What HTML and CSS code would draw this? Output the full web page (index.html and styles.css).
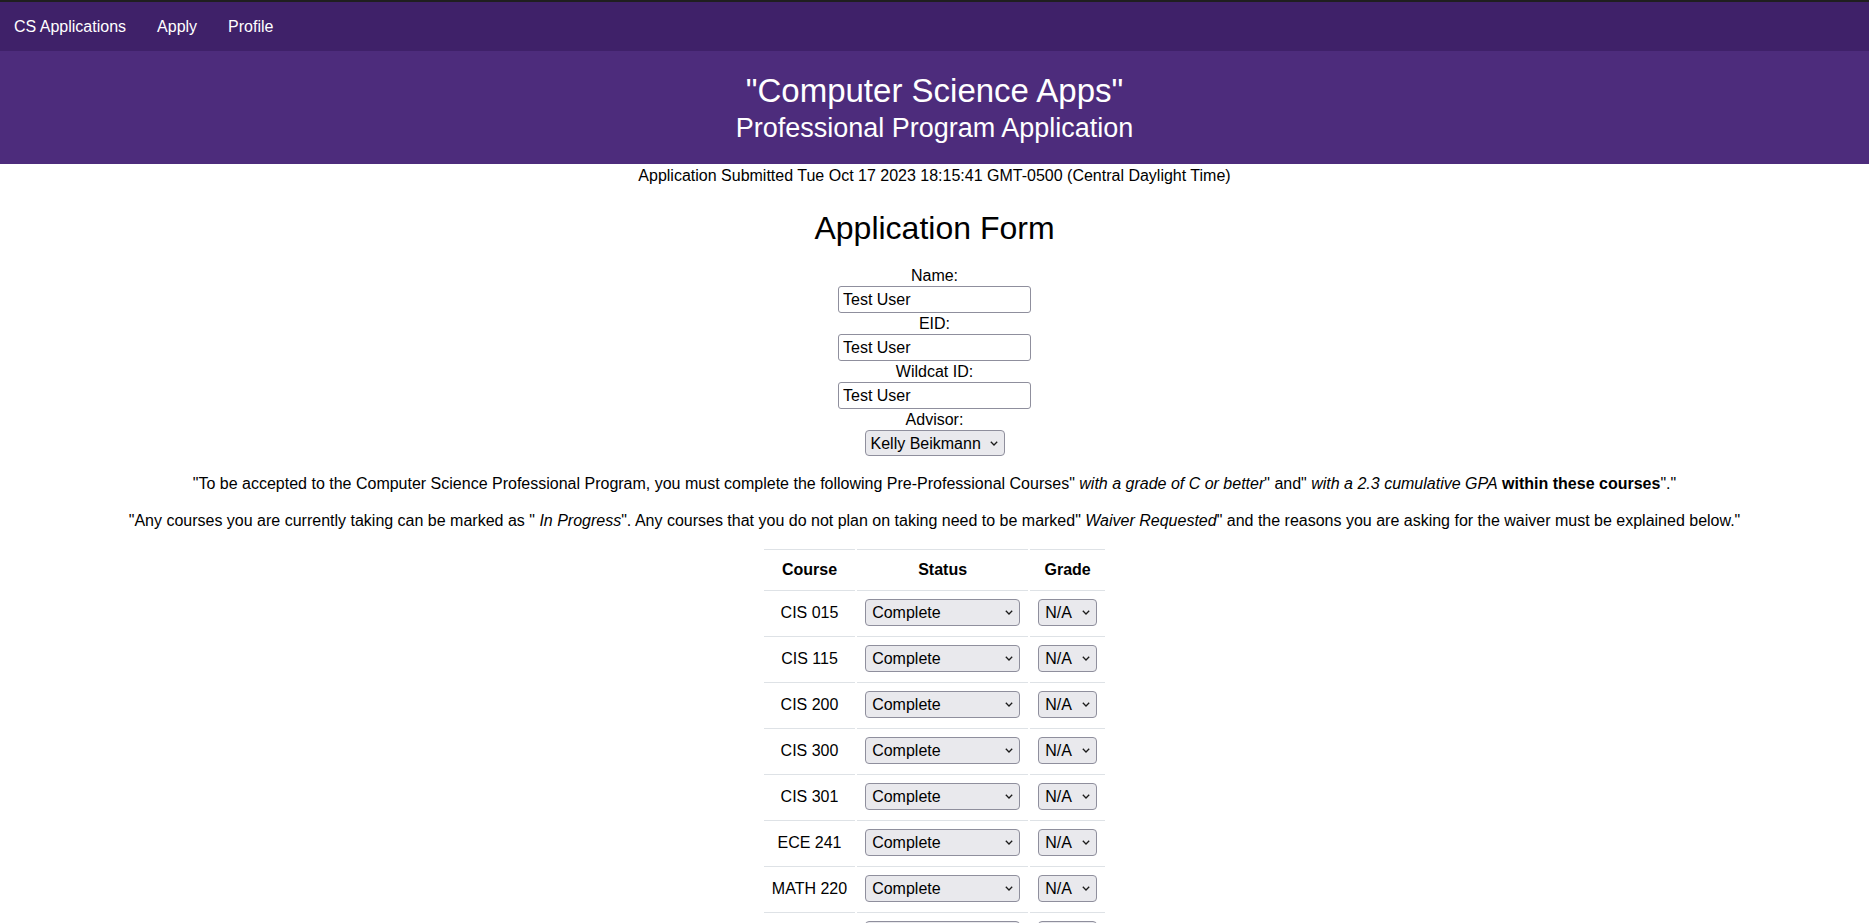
FILE: index.html
```html
<!DOCTYPE html>
<html lang="en">
<head>
<meta charset="utf-8">
<title>CS Applications</title>
<link rel="stylesheet" href="styles.css">
</head>
<body>
<nav class="topnav">
  <a class="nav-link" href="#">CS Applications</a>
  <a class="nav-link" href="#">Apply</a>
  <a class="nav-link" href="#">Profile</a>
</nav>
<header class="banner">
  <div class="banner-title">"Computer Science Apps"</div>
  <div class="banner-sub">Professional Program Application</div>
</header>
<main class="content">
  <div class="submitted">Application Submitted Tue Oct 17 2023 18:15:41 GMT-0500 (Central Daylight Time)</div>
  <h1 class="form-title">Application Form</h1>
  <div class="fields">
    <label class="field-label">Name:</label>
    <input class="text-input" type="text" value="Test User">
    <label class="field-label">EID:</label>
    <input class="text-input" type="text" value="Test User">
    <label class="field-label">Wildcat ID:</label>
    <input class="text-input" type="text" value="Test User">
    <label class="field-label">Advisor:</label>
    <span class="sel sel-advisor">
      <select><option>Kelly Beikmann</option></select>
      <svg class="chev" width="8" height="5" viewBox="0 0 8 5"><path d="M0.8 0.8 L4 4 L7.2 0.8" fill="none" stroke="#1b1b1b" stroke-width="1.3"/></svg>
    </span>
  </div>
  <p class="note note-first">"To be accepted to the Computer Science Professional Program, you must complete the following Pre-Professional Courses" <i>with a grade of C or better</i>" and" <i>with a 2.3 cumulative GPA</i> <b>within these courses</b>"."</p>
  <p class="note">"Any courses you are currently taking can be marked as " <i>In Progress</i>". Any courses that you do not plan on taking need to be marked" <i>Waiver Requested</i>" and the reasons you are asking for the waiver must be explained below."</p>
  <table class="courses">
    <thead>
      <tr><th class="c-course">Course</th><th class="c-status">Status</th><th class="c-grade">Grade</th></tr>
    </thead>
    <tbody id="rows"></tbody>
  </table>
</main>
<script>
  var courses = ["CIS 015","CIS 115","CIS 200","CIS 300","CIS 301","ECE 241","MATH 220","MATH 221","CIS 450"];
  var chev = '<svg class="chev" width="8" height="5" viewBox="0 0 8 5"><path d="M0.8 0.8 L4 4 L7.2 0.8" fill="none" stroke="#1b1b1b" stroke-width="1.3"/></svg>';
  var html = "";
  courses.forEach(function (c) {
    html += '<tr><td class="course-name">' + c + '</td>' +
      '<td><span class="sel sel-status"><select><option>Complete</option><option>In Progress</option><option>Waiver Requested</option></select>' + chev + '</span></td>' +
      '<td><span class="sel sel-grade"><select><option>N/A</option><option>A</option><option>B</option><option>C</option></select>' + chev + '</span></td></tr>';
  });
  document.getElementById("rows").innerHTML = html;
</script>
</body>
</html>
```

FILE: styles.css
```css
html, body {
  margin: 0;
  padding: 0;
}
body {
  font-family: "Segoe UI", "Liberation Sans", Arial, sans-serif;
  font-size: 16px;
  line-height: 21px;
  color: #000;
  background: #fff;
}
.topnav {
  display: flex;
  align-items: center;
  gap: 31px;
  height: 49px;
  padding-left: 14px;
  background: #3f2169;
  border-top: 2px solid #1f1f1f;
}
.nav-link {
  color: #fff;
  text-decoration: none;
  font-size: 16px;
}
.banner {
  background: #4d2c7c;
  color: #fff;
  text-align: center;
  height: 113px;
  box-sizing: border-box;
  padding-top: 20px;
}
.banner-title {
  font-size: 33px;
  line-height: 40px;
}
.banner-sub {
  font-size: 27px;
  line-height: 34px;
}
.content {
  text-align: center;
}
.submitted {
  padding-top: 1px;
  line-height: 21px;
}
.form-title {
  font-size: 32px;
  font-weight: normal;
  line-height: 40px;
  margin: 22px 0 17px;
}
.fields {
  display: flex;
  flex-direction: column;
  align-items: center;
}
.field-label {
  display: block;
  line-height: 21px;
}
.text-input {
  width: 193px;
  height: 27px;
  box-sizing: border-box;
  border: 1px solid #8f8f9d;
  border-radius: 3px;
  padding: 0 4px;
  font-family: inherit;
  font-size: 16px;
  color: #000;
  margin: 0;
}
.sel {
  position: relative;
  display: inline-block;
  vertical-align: middle;
}
.sel select {
  -webkit-appearance: none;
  appearance: none;
  display: block;
  box-sizing: border-box;
  height: 27px;
  margin: 0;
  padding: 0 20px 0 6px;
  background: #e9e9ed;
  border: 1px solid #8f8f9d;
  border-radius: 4px;
  font-family: inherit;
  font-size: 16px;
  color: #000;
}
.sel .chev {
  position: absolute;
  right: 7px;
  top: 11px;
  pointer-events: none;
}
.sel-advisor select {
  width: 140px;
  height: 26px;
  padding: 0 18px 0 5px;
}
.sel-status select {
  width: 155px;
}
.sel-grade select {
  width: 59px;
}
.note {
  margin: 16px 0;
}
.note-first {
  margin-top: 17px;
}
.courses {
  margin: 0 auto;
  border-collapse: separate;
  border-spacing: 2px;
}
.courses th,
.courses td {
  border-top: 1px solid #dee2e6;
  padding: 8px;
  text-align: center;
  vertical-align: middle;
}
.courses th {
  font-weight: bold;
  height: 22px;
  box-sizing: content-box;
}
.c-course { width: 73px; }
.c-status { width: 155px; }
.c-grade { width: 59px; }
.course-name {
  white-space: nowrap;
}
```
